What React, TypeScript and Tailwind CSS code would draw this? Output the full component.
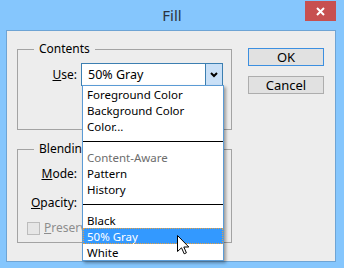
const items: { label: string; kind?: 'sep' | 'dim' | 'sel' }[] = [
  { label: 'Foreground Color' },
  { label: 'Background Color' },
  { label: 'Color...' },
  { label: '', kind: 'sep' },
  { label: 'Content-Aware', kind: 'dim' },
  { label: 'Pattern' },
  { label: 'History' },
  { label: '', kind: 'sep' },
  { label: 'Black' },
  { label: '50% Gray', kind: 'sel' },
  { label: 'White' },
];

function Cursor() {
  return (
    <svg width="13" height="20" viewBox="0 0 13 20" className="absolute left-[94px] top-[149px]">
      <path
        d="M0.5 0.5 L0.5 16.5 L4.5 12.8 L7.2 18.8 L9.4 17.8 L6.8 12 L11.8 12 Z"
        fill="#fff"
        stroke="#000"
        strokeWidth="1"
        strokeLinejoin="miter"
      />
    </svg>
  );
}

function Dropdown() {
  return (
    <div className="absolute left-0 top-full w-[142px] h-[176px] border border-[#5b9bd5] bg-white shadow-[2px_2px_3px_rgba(0,0,0,0.35)] z-10 text-[11.5px]">
      {items.map((item, i) => {
        if (item.kind === 'sep') {
          return (
            <div key={i} className="h-[15px] flex items-center">
              <div className="w-full h-px bg-black" />
            </div>
          );
        }
        if (item.kind === 'sel') {
          return (
            <div
              key={i}
              className="h-[16px] flex items-center pl-[4px] leading-[15px] bg-[#3399ff] text-white outline-1 outline-dotted outline-[#e8a040] -outline-offset-1"
            >
              {item.label}
            </div>
          );
        }
        return (
          <div
            key={i}
            className={`h-[16px] flex items-center pl-[4px] leading-[15px] ${item.kind === 'dim' ? 'text-[#6d6d6d]' : 'text-black'}`}
          >
            {item.label}
          </div>
        );
      })}
      <Cursor />
    </div>
  );
}

export default function App() {
  return (
    <div className="w-[344px] h-[268px] bg-[#85c6fd] flex flex-col font-['Noto_Sans',sans-serif] text-[12px] leading-[16px] text-black overflow-hidden">
      {/* title bar */}
      <div className="h-[30px] grid grid-cols-[1fr_auto_1fr] items-start">
        <div />
        <div className="pt-[5px] text-[15px] leading-[20px] text-[#2a3340]">Fill</div>
        <div className="flex justify-end pr-[8px] pt-[1px]">
          <div className="w-[31px] h-[20px] bg-[#c75050] flex items-center justify-center">
            <svg width="9" height="9" viewBox="0 0 9 9">
              <path d="M1 1 L8 8 M8 1 L1 8" stroke="#fff" strokeWidth="2" />
            </svg>
          </div>
        </div>
      </div>

      {/* body */}
      <div className="ml-[6px] w-[330px] h-[232px] border border-[#6ea4d4] bg-[#ededed] flex">
        <div className="pl-[10px] pt-[10px] flex flex-col">
          <fieldset className="w-[215px] h-[89px] border border-[#a3a3a3] px-0">
            <legend className="ml-[16px] px-[5px] leading-[16px]">Contents</legend>
            <div className="pt-[6px] flex items-center">
              <div className="w-[59px] text-right">
                <span className="underline">U</span>se:
              </div>
              <div className="ml-[4px] relative w-[142px] h-[23px] border border-[#3c7fb1] bg-white flex">
                <div className="flex-1 flex items-center pl-[6px] text-[12.5px]">50% Gray</div>
                <div className="w-[17px] h-full border-l border-[#3c7fb1] bg-[#c9e0f7] flex items-center justify-center">
                  <svg width="8" height="6" viewBox="0 0 8 6">
                    <path d="M1 1 L4 4 L7 1" stroke="#000" strokeWidth="2" fill="none" />
                  </svg>
                </div>
                <Dropdown />
              </div>
            </div>
          </fieldset>

          <fieldset className="mt-[11px] w-[215px] h-[102px] border border-[#a3a3a3] px-0">
            <legend className="ml-[16px] px-[5px] leading-[16px]">Blending</legend>
            <div className="pt-[6px] flex flex-col">
              <div className="h-[22px] flex items-center">
                <div className="w-[59px] text-right">
                  <span className="underline">M</span>ode:
                </div>
              </div>
              <div className="mt-[7px] h-[22px] flex items-center">
                <div className="w-[59px] text-right">
                  <span className="underline">O</span>pacity:
                </div>
              </div>
              {/* the open list lies over most of this label, as in the dialog */}
              <div className="mt-[7px] h-[14px] flex items-center pl-[9px] gap-[4px] text-[#8d8d8d]">
                <div className="w-[13px] h-[13px] border border-[#bcbcbc] bg-[#e6e6e6]" />
                <span>
                  <span className="underline">P</span>reserve Transparency
                </span>
              </div>
            </div>
          </fieldset>
        </div>

        <div className="ml-[16px] pt-[17px] flex flex-col gap-[10px]">
          <button className="w-[76px] h-[18px] border border-[#3c8fe0] bg-[#e1e1e1] flex items-center justify-center text-[13px]">
            OK
          </button>
          <button className="w-[76px] h-[18px] border border-[#adadad] bg-[#e1e1e1] flex items-center justify-center text-[13px]">
            Cancel
          </button>
        </div>
      </div>
    </div>
  );
}
